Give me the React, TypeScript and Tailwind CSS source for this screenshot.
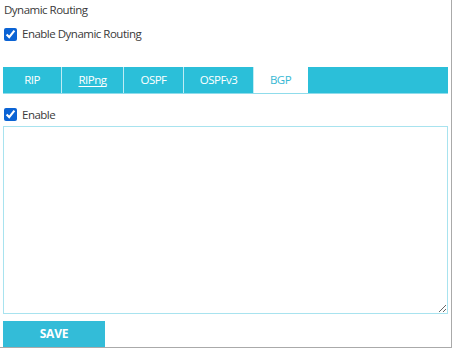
import { useState } from "react";

const tabs = ["RIP", "RIPng", "OSPF", "OSPFv3", "BGP"];
const widths = ["w-[59px]", "w-[62px]", "w-[60px]", "w-[70px]", "w-[54px]"];

export default function App() {
  const [active, setActive] = useState("BGP");
  const [enabled, setEnabled] = useState(true);
  const [bgp, setBgp] = useState(true);

  return (
    <div className="w-[452px] h-[348px] bg-white border-r border-b border-[#aaaaaa] font-['Open_Sans',sans-serif] text-[11.5px] tracking-[-0.5px] text-[#3a3a3a] flex flex-col">
      <div className="pl-[4px] pt-[2px] leading-[16px]">Dynamic Routing</div>

      <label className="flex items-center gap-[5px] pl-[4px] mt-[9px] h-[14px]">
        <input
          type="checkbox"
          checked={enabled}
          onChange={(e) => setEnabled(e.target.checked)}
          className="m-0 w-[13px] h-[13px] accent-[#0b63d4]"
        />
        <span>Enable Dynamic Routing</span>
      </label>

      <div className="mx-[3px] mt-[26px] h-[27px] bg-[#2bbfd9] flex border-b border-[#8fdceb]">
        {tabs.map((t, i) => (
          <button
            key={t}
            onClick={() => setActive(t)}
            className={`${widths[i]} h-full flex items-center justify-center border-r border-white/70 ${
              active === t ? "bg-white text-[#38b8d4] h-[27px]" : "text-white"
            } ${t === "RIPng" ? "underline underline-offset-2" : ""}`}
          >
            {t}
          </button>
        ))}
      </div>

      <label className="flex items-center gap-[5px] pl-[4px] mt-[14px] h-[14px]">
        <input
          type="checkbox"
          checked={bgp}
          onChange={(e) => setBgp(e.target.checked)}
          className="m-0 w-[13px] h-[13px] accent-[#0b63d4]"
        />
        <span>Enable</span>
      </label>

      <textarea className="mx-[3px] mt-[4px] h-[190px] border border-[#a8e3ef] outline-none resize p-1" />

      <button className="ml-[3px] mt-[7px] w-[102px] h-[26px] bg-[#33bcd8] text-white font-bold text-[12px] tracking-[-0.2px]">
        SAVE
      </button>
    </div>
  );
}
